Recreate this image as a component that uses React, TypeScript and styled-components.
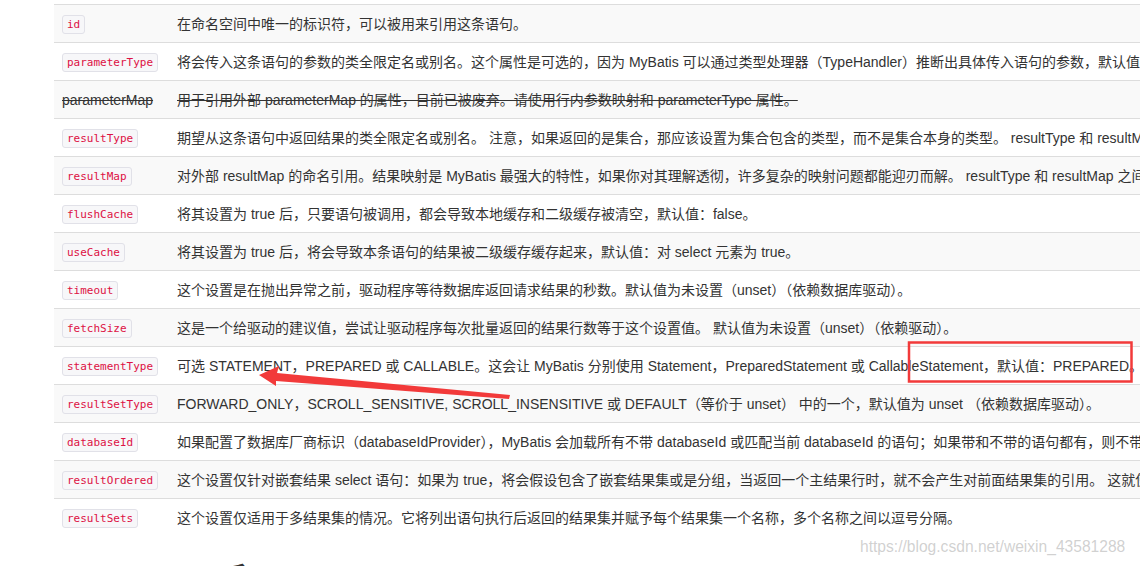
import * as React from 'react';
import styled, { createGlobalStyle } from 'styled-components';

type Attr = {
    name: string,
    desc: string,
    deprecated?: boolean
}

const attrs: Attr[] = [
    { name: 'id', desc: '在命名空间中唯一的标识符，可以被用来引用这条语句。' },
    { name: 'parameterType', desc: '将会传入这条语句的参数的类全限定名或别名。这个属性是可选的，因为 MyBatis 可以通过类型处理器（TypeHandler）推断出具体传入语句的参数，默认值为未设置（unset）。' },
    { name: 'parameterMap', desc: '用于引用外部 parameterMap 的属性，目前已被废弃。请使用行内参数映射和 parameterType 属性。', deprecated: true },
    { name: 'resultType', desc: '期望从这条语句中返回结果的类全限定名或别名。 注意，如果返回的是集合，那应该设置为集合包含的类型，而不是集合本身的类型。 resultType 和 resultMap 之间只能同时使用一个。' },
    { name: 'resultMap', desc: '对外部 resultMap 的命名引用。结果映射是 MyBatis 最强大的特性，如果你对其理解透彻，许多复杂的映射问题都能迎刃而解。 resultType 和 resultMap 之间只能同时使用一个。' },
    { name: 'flushCache', desc: '将其设置为 true 后，只要语句被调用，都会导致本地缓存和二级缓存被清空，默认值：false。' },
    { name: 'useCache', desc: '将其设置为 true 后，将会导致本条语句的结果被二级缓存缓存起来，默认值：对 select 元素为 true。' },
    { name: 'timeout', desc: '这个设置是在抛出异常之前，驱动程序等待数据库返回请求结果的秒数。默认值为未设置（unset）（依赖数据库驱动）。' },
    { name: 'fetchSize', desc: '这是一个给驱动的建议值，尝试让驱动程序每次批量返回的结果行数等于这个设置值。 默认值为未设置（unset）（依赖驱动）。' },
    { name: 'statementType', desc: '可选 STATEMENT，PREPARED 或 CALLABLE。这会让 MyBatis 分别使用 Statement，PreparedStatement 或 CallableStatement，默认值：PREPARED。' },
    { name: 'resultSetType', desc: 'FORWARD_ONLY，SCROLL_SENSITIVE, SCROLL_INSENSITIVE 或 DEFAULT（等价于 unset） 中的一个，默认值为 unset （依赖数据库驱动）。' },
    { name: 'databaseId', desc: '如果配置了数据库厂商标识（databaseIdProvider），MyBatis 会加载所有不带 databaseId 或匹配当前 databaseId 的语句；如果带和不带的语句都有，则不带的会被忽略。' },
    { name: 'resultOrdered', desc: '这个设置仅针对嵌套结果 select 语句：如果为 true，将会假设包含了嵌套结果集或是分组，当返回一个主结果行时，就不会产生对前面结果集的引用。 这就使得在获取嵌套结果集的时候不至于内存不够用。默认值：false。' },
    { name: 'resultSets', desc: '这个设置仅适用于多结果集的情况。它将列出语句执行后返回的结果集并赋予每个结果集一个名称，多个名称之间以逗号分隔。' },
];

const GlobalStyle = createGlobalStyle`
body {
    margin: 0;
    background: white;
    overflow: hidden;
    font-family: "Liberation Sans", "Noto Sans CJK SC", sans-serif;
    color: #333;
}
`

const Page = styled.div`
position: relative;
width: 1140px;
height: 566px;
overflow: hidden;
padding: 4px 0 0 54px;
box-sizing: border-box;
`;

const Table = styled.table`
border-collapse: collapse;
white-space: nowrap;
font-size: 14px;
`;

const Row = styled.tr<{ $odd: boolean }>`
background: ${p => p.$odd ? '#f9f9f9' : 'white'};
height: 38px;
`;

const Cell = styled.td<{ $strike?: boolean }>`
border-top: 1px solid #ddd;
padding: 0 8px;
height: 37px;
line-height: 20px;
vertical-align: middle;
text-decoration: ${p => p.$strike ? 'line-through' : 'none'};
`;

const NameBox = styled.div`
width: 99px;
`;

const Code = styled.code`
display: inline-block;
vertical-align: middle;
font-family: "DejaVu Sans Mono", "Liberation Mono", monospace;
font-size: 11px;
line-height: 15px;
padding: 1px 4px;
color: #dd1144;
background: #f7f7f9;
border: 1px solid #e1e1e8;
border-radius: 3px;
`;

const NextHeading = styled.h3`
margin: 25px 0 0 0;
font-size: 26px;
font-weight: bold;
line-height: 30px;
white-space: nowrap;
`;

const Marks = styled.svg`
position: absolute;
left: 0;
top: 0;
pointer-events: none;
`;

const Watermark = styled.div`
position: absolute;
left: 860px;
top: 537px;
font-size: 15.6px;
line-height: 20px;
color: rgba(170, 170, 170, 0.55);
`;

export default function App() {
    return (
        <Page>
            <GlobalStyle />
            <Table>
                <tbody>
                    {attrs.map((a, i) => (
                        <Row key={a.name} $odd={i % 2 === 0}>
                            <Cell $strike={a.deprecated}>
                                <NameBox>{a.deprecated ? a.name : <Code>{a.name}</Code>}</NameBox>
                            </Cell>
                            <Cell $strike={a.deprecated}>{a.desc}</Cell>
                        </Row>
                    ))}
                </tbody>
            </Table>
            <NextHeading>insert, update 和 delete</NextHeading>
            <Marks width="1140" height="566" viewBox="0 0 1140 566">
                <rect x="909" y="342.5" width="222.5" height="39" fill="none" stroke="#f23a3a" strokeWidth="2.5" />
                <polygon points="259,375 279,366 277,373 510,395 509,399 276,381 276,386" fill="#f23a3a" />
            </Marks>
            <Watermark>https://blog.csdn.net/weixin_43581288</Watermark>
        </Page>
    );
}
